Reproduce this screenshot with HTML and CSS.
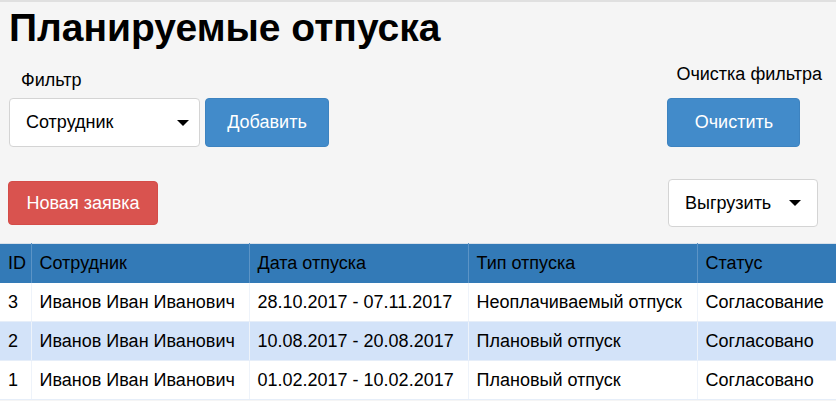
FILE: index.html
```html
<!DOCTYPE html>
<html lang="ru">
<head>
<meta charset="utf-8">
<title>Планируемые отпуска</title>
<link rel="stylesheet" href="styles.css">
</head>
<body>
<div class="page">
  <h1 class="title">Планируемые отпуска</h1>
  <div class="filters">
    <div class="filter-group">
      <div class="label">Фильтр</div>
      <div class="controls">
        <div class="select">
          <span>Сотрудник</span>
          <span class="caret"></span>
        </div>
        <button class="btn btn-primary btn-add">Добавить</button>
      </div>
    </div>
    <div class="clear-group">
      <div class="label label-clear">Очистка фильтра</div>
      <button class="btn btn-primary btn-clear">Очистить</button>
    </div>
  </div>
  <div class="actions">
    <button class="btn btn-danger btn-new">Новая заявка</button>
    <button class="btn btn-default btn-export"><span>Выгрузить</span><span class="caret"></span></button>
  </div>
  <table class="grid">
    <colgroup>
      <col class="c-id"><col class="c-emp"><col class="c-date"><col class="c-type"><col class="c-status">
    </colgroup>
    <thead>
      <tr><th>ID</th><th>Сотрудник</th><th>Дата отпуска</th><th>Тип отпуска</th><th>Статус</th></tr>
    </thead>
    <tbody>
      <tr><td>3</td><td>Иванов Иван Иванович</td><td>28.10.2017 - 07.11.2017</td><td>Неоплачиваемый отпуск</td><td>Согласование</td></tr>
      <tr class="alt"><td>2</td><td>Иванов Иван Иванович</td><td>10.08.2017 - 20.08.2017</td><td>Плановый отпуск</td><td>Согласовано</td></tr>
      <tr><td>1</td><td>Иванов Иван Иванович</td><td>01.02.2017 - 10.02.2017</td><td>Плановый отпуск</td><td>Согласовано</td></tr>
    </tbody>
  </table>
</div>
</body>
</html>
```
FILE: styles.css
```css
html, body {
  margin: 0;
  padding: 0;
  background: #f5f5f5;
}
body {
  font-family: "Liberation Sans", Arial, sans-serif;
  font-size: 18px;
  color: #000;
}
.page {
  border-top: 2px solid #e0e0e0;
}
.title {
  margin: 0;
  padding: 4px 0 0 9px;
  font-size: 39px;
  line-height: 44px;
  font-weight: bold;
}
.filters {
  display: flex;
  justify-content: space-between;
  padding: 0 14px 0 9px;
  margin-top: 13px;
}
.label {
  font-size: 18px;
  line-height: 22px;
  padding-left: 12px;
  margin-top: 6px;
  margin-bottom: 7px;
}
.label-clear {
  margin-top: 0;
  margin-bottom: 13px;
  padding-left: 9px;
}
.controls {
  display: flex;
  gap: 5px;
}
.select {
  box-sizing: border-box;
  width: 191px;
  height: 49px;
  background: #fff;
  border: 1px solid #d4d4d4;
  border-radius: 4px;
  display: flex;
  align-items: center;
  justify-content: space-between;
  padding: 0 10px 0 16px;
  font-size: 18px;
}
.caret {
  width: 0;
  height: 0;
  border-left: 6px solid transparent;
  border-right: 6px solid transparent;
  border-top: 6px solid #000;
}
.btn {
  box-sizing: border-box;
  font-family: "Liberation Sans", Arial, sans-serif;
  font-size: 18px;
  border-radius: 4px;
  cursor: pointer;
  margin: 0;
}
.btn-primary {
  background: #428bca;
  border: 1px solid #3d83c0;
  color: #fff;
  height: 49px;
}
.btn-add {
  width: 124px;
}
.btn-clear {
  width: 133px;
}
.actions {
  display: flex;
  justify-content: space-between;
  align-items: flex-start;
  padding: 0 18px 0 8px;
  margin-top: 32px;
}
.btn-danger {
  margin-top: 2px;
  width: 150px;
  height: 44px;
  background: #d9534f;
  border: 1px solid #d44c48;
  color: #fff;
}
.btn-default {
  width: 150px;
  height: 48px;
  background: #fff;
  border: 1px solid #d4d4d4;
  color: #000;
  display: flex;
  align-items: center;
  justify-content: space-between;
  padding: 0 16px 0 16px;
}
.grid {
  width: 100%;
  table-layout: fixed;
  border-collapse: collapse;
  margin-top: 16px;
  font-size: 18px;
  border-top: 1px solid #d9e1ea;
}
.grid th {
  background: #337ab7;
  font-weight: normal;
  text-align: left;
  height: 39px;
  padding: 0 8px;
  border-left: 1px solid #5c94c6;
  white-space: nowrap;
}
.grid th:first-child, .grid td:first-child {
  border-left: none;
}
.grid td {
  height: 38px;
  padding: 0 8px;
  background: #fff;
  border-left: 1px solid #eef3fa;
  border-bottom: 1px solid #e6eef9;
  white-space: nowrap;
}
.grid tr.alt td {
  background: #d3e3f9;
}
.c-id { width: 31px; }
.c-emp { width: 218px; }
.c-date { width: 219px; }
.c-type { width: 229px; }
```
